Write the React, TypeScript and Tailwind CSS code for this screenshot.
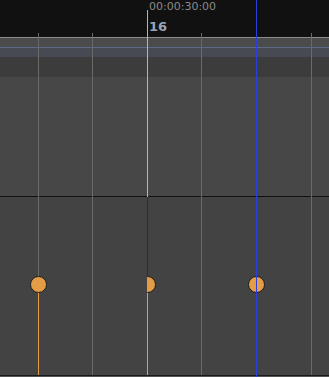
const gridXs = [38, 92, 201, 311];

function Keyframe({ x, clipLeft }: { x: number; clipLeft?: boolean }) {
  return (
    <div
      className="absolute top-[276px] h-[17px] w-[17px] overflow-hidden"
      style={{ left: x - 8 }}
    >
      <div
        className={
          "h-[17px] w-[17px] rounded-full border border-[#1c1c1c] bg-[#e59d45]" +
          (clipLeft ? " [clip-path:inset(0_0_0_8px)]" : "")
        }
      />
    </div>
  );
}

export default function App() {
  return (
    <div className="relative h-[377px] w-[329px] overflow-hidden bg-[#434343] font-['DejaVu_Sans',sans-serif]">
      <div className="flex flex-col">
        <div className="h-[37px] bg-[#111111]" />
        <div className="h-px bg-[#8a8a8a]" />
        <div className="h-[9px] bg-[#4b4b4b]" />
        <div className="h-px bg-[#5a6a86]" />
        <div className="h-[9px] bg-[#474a53]" />
        <div className="h-[20px] bg-[#3c3c3c]" />
        <div className="h-[119px] bg-[#474747]" />
        <div className="h-px bg-[#111111]" />
        <div className="h-[178px] bg-[#434343]" />
        <div className="h-px bg-[#1a1a1a]" />
        <div className="h-px bg-[#555555]" />
      </div>

      {gridXs.map((x) => (
        <div
          key={x}
          className="absolute top-[33px] h-[342px] w-px bg-[#6a6a6a]"
          style={{ left: x }}
        />
      ))}

      <div className="absolute left-[147px] top-[10px] h-[187px] w-px bg-[#b4b4b4]" />
      <div className="absolute left-[147px] top-[197px] h-[80px] w-px bg-[#2e2e2e]" />

      <div className="absolute left-[38px] top-[292px] h-[83px] w-px bg-[#e59d45]" />
      <div className="absolute left-[147px] top-[292px] h-[83px] w-px bg-[#e59d45]" />

      <Keyframe x={38} />
      <Keyframe x={147} clipLeft />
      <Keyframe x={256} />

      <div className="absolute left-[256px] top-0 h-[377px] w-px bg-[#2b3ee0]" />

      <div className="absolute left-[149px] top-0 text-[11px] leading-[14px] text-[#8a8a8a]">
        00:00:30:00
      </div>
      <div className="absolute left-[149px] top-[19px] text-[13px] font-bold leading-[15px] text-[#9ba4b6]">
        16
      </div>
    </div>
  );
}
